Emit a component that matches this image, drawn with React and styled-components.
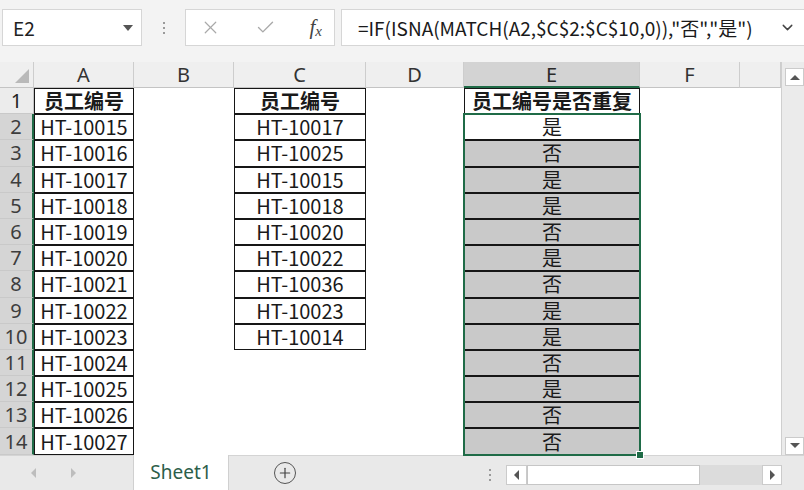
import React from "react";
import styled, { createGlobalStyle } from "styled-components";
import { X, Check, ChevronDown, Plus } from "lucide-react";

const ROW_H = 26.2;
const GREEN = "#1f6b47";

const GlobalStyle = createGlobalStyle`
  html, body {
    margin: 0;
    padding: 0;
    background: #f3f3f3;
    overflow: hidden;
  }
  body {
    font-family: "Noto Sans CJK SC", "Noto Sans", sans-serif;
    color: #1a1a1a;
  }
`;

const Page = styled.div`
  width: 804px;
  height: 490px;
  display: flex;
  flex-direction: column;
  overflow: hidden;
`;

/* ---------- formula bar ---------- */

const Toolbar = styled.div`
  height: 62px;
  flex: none;
  display: flex;
  align-items: flex-start;
  padding: 9px 0 0 2px;
  box-sizing: border-box;
  background: #f3f3f3;
`;

const Box = styled.div`
  height: 37px;
  box-sizing: border-box;
  background: #fff;
  border: 1px solid #d6d6d6;
  display: flex;
  align-items: center;
`;

const NameBox = styled(Box)`
  width: 140px;
  padding: 0 8px 0 10px;
  justify-content: space-between;
  font-size: 19px;
  color: #222;
`;

const Caret = styled.span`
  width: 0;
  height: 0;
  border-left: 5px solid transparent;
  border-right: 5px solid transparent;
  border-top: 6px solid #555;
`;

const Grip = styled.div`
  width: 43px;
  height: 37px;
  display: flex;
  flex-direction: column;
  align-items: center;
  justify-content: center;
  gap: 3px;
  span {
    width: 2px;
    height: 2px;
    background: #9a9a9a;
  }
`;

const FxButtons = styled(Box)`
  width: 150px;
  padding: 0 12px 0 14px;
  justify-content: space-between;
  color: #a9a9a9;
`;

const Fx = styled.span`
  font-family: "Liberation Serif", "DejaVu Serif", serif;
  font-style: italic;
  font-size: 21px;
  color: #444;
  sub {
    font-size: 15px;
    vertical-align: baseline;
    position: relative;
    top: 2px;
  }
`;

const FormulaBox = styled(Box)`
  flex: 1;
  margin-left: 6px;
  border-right: none;
  padding: 0 8px 0 16px;
  justify-content: space-between;
  font-size: 19px;
  color: #1a1a1a;
  white-space: nowrap;
`;

/* ---------- sheet ---------- */

const SheetArea = styled.div`
  flex: none;
  height: ${26 + ROW_H * 14}px;
  display: flex;
  background: #fff;
`;

const Grid = styled.div`
  display: flex;
  width: 782px;
`;

const Column = styled.div`
  width: ${(p) => p.$w}px;
  flex: none;
  display: flex;
  flex-direction: column;
  background: #fff;
  border-right: ${(p) => (p.$edge ? "1px solid #cfcfcf" : "none")};
  box-sizing: border-box;
`;

const ColHead = styled.div`
  height: 26px;
  flex: none;
  box-sizing: border-box;
  display: flex;
  align-items: center;
  justify-content: center;
  font-size: 20px;
  color: ${(p) => (p.$active ? "#2a2a2a" : "#333")};
  background: ${(p) => (p.$active ? "#d3d3d3" : "#efefef")};
  border-bottom: ${(p) => (p.$active ? `2px solid ${GREEN}` : "1px solid #c4c4c4")};
  border-right: 1px solid #cdcdcd;
  font-family: "Noto Sans", sans-serif;
`;

const Corner = styled(ColHead)`
  position: relative;
  &::after {
    content: "";
    position: absolute;
    right: 4px;
    bottom: 4px;
    border-left: 14px solid transparent;
    border-bottom: 14px solid #b9b9b9;
  }
`;

const RowNum = styled.div`
  height: ${ROW_H}px;
  flex: none;
  box-sizing: border-box;
  display: flex;
  align-items: center;
  justify-content: center;
  font-family: "Noto Sans", sans-serif;
  font-size: 20px;
  color: ${(p) => (p.$active ? "#3d3d3d" : "#222")};
  background: ${(p) => (p.$active ? "#d5d5d5" : "#ececec")};
  border-bottom: 1px solid #c9c9c9;
  border-right: ${(p) => (p.$active ? `2px solid ${GREEN}` : "1px solid #c4c4c4")};
`;

const Cell = styled.div`
  height: ${ROW_H}px;
  flex: none;
  box-sizing: border-box;
  display: flex;
  align-items: center;
  justify-content: center;
  font-size: 20px;
  line-height: 1;
  white-space: nowrap;
  font-weight: ${(p) => (p.$bold ? 700 : 400)};
  background: ${(p) => (p.$shaded ? "#c9c9c9" : "#fff")};
  border: ${(p) => (p.$bordered ? "1px solid #161616" : "none")};
`;

const Selection = styled.div`
  position: relative;
  display: flex;
  flex-direction: column;
  outline: 2px solid ${GREEN};
  outline-offset: -1px;
  &::after {
    content: "";
    position: absolute;
    right: -4px;
    bottom: -4px;
    width: 6px;
    height: 6px;
    background: ${GREEN};
    border: 1px solid #fff;
  }
`;

const VScroll = styled.div`
  flex: 1;
  display: flex;
  flex-direction: column;
  justify-content: space-between;
  align-items: flex-end;
  padding: 6px 0 0;
  background: #ebebeb;
`;

const ArrowBtn = styled.div`
  width: ${(p) => p.$w || 19}px;
  height: ${(p) => p.$h || 18}px;
  flex: none;
  box-sizing: border-box;
  background: #fff;
  border: 1px solid #cbcbcb;
  display: flex;
  align-items: center;
  justify-content: center;
`;

const Tri = styled.span`
  width: 0;
  height: 0;
  ${(p) =>
    p.$dir === "up"
      ? `border-left:5px solid transparent;border-right:5px solid transparent;border-bottom:5px solid #555;`
      : p.$dir === "down"
      ? `border-left:5px solid transparent;border-right:5px solid transparent;border-top:5px solid #555;`
      : p.$dir === "left"
      ? `border-top:5px solid transparent;border-bottom:5px solid transparent;border-right:5px solid ${p.$c || "#555"};`
      : `border-top:5px solid transparent;border-bottom:5px solid transparent;border-left:5px solid ${p.$c || "#555"};`}
`;

/* ---------- sheet tabs ---------- */

const TabBar = styled.div`
  flex: 1;
  display: flex;
  align-items: stretch;
  background: #e9e9e9;
  border-top: 1px solid #d4d4d4;
`;

const TabNav = styled.div`
  width: 133px;
  display: flex;
  align-items: center;
  padding-left: 31px;
  gap: 35px;
  box-sizing: border-box;
`;

const SheetTab = styled.div`
  width: 94px;
  background: #fff;
  display: flex;
  align-items: center;
  justify-content: center;
  font-family: "Noto Sans", sans-serif;
  font-size: 19px;
  color: #2c5e4a;
  border-left: 1px solid #d0d0d0;
  border-right: 1px solid #d0d0d0;
  margin-top: -1px;
`;

const AddSheet = styled.div`
  margin-left: 45px;
  align-self: center;
  width: 22px;
  height: 22px;
  box-sizing: border-box;
  border: 1.5px solid #555;
  border-radius: 50%;
  display: flex;
  align-items: center;
  justify-content: center;
  color: #444;
`;

const Spacer = styled.div`
  flex: 1;
`;

const HScrollWrap = styled.div`
  width: 331px;
  display: flex;
  align-items: center;
  padding-top: 4px;
`;

const HGrip = styled(Grip)`
  width: 33px;
  height: 20px;
`;

const Thumb = styled.div`
  width: 173px;
  height: 20px;
  box-sizing: border-box;
  background: #fff;
  border: 1px solid #c6c6c6;
`;

const Track = styled.div`
  width: 62px;
  height: 20px;
  background: #dcdcdc;
`;

const colA = ["HT-10015", "HT-10016", "HT-10017", "HT-10018", "HT-10019", "HT-10020", "HT-10021", "HT-10022", "HT-10023", "HT-10024", "HT-10025", "HT-10026", "HT-10027"];
const colC = ["HT-10017", "HT-10025", "HT-10015", "HT-10018", "HT-10020", "HT-10022", "HT-10036", "HT-10023", "HT-10014"];
const colE = ["是", "否", "是", "是", "否", "是", "否", "是", "是", "否", "是", "否", "否"];

const BlankColumn = ({ w, label, edge }) => (
  <Column $w={w} $edge={edge}>
    <ColHead>{label}</ColHead>
  </Column>
);

export default function App() {
  return (
    <Page>
      <GlobalStyle />
      <Toolbar>
        <NameBox>
          E2
          <Caret />
        </NameBox>
        <Grip>
          <span />
          <span />
          <span />
        </Grip>
        <FxButtons>
          <X size={21} strokeWidth={1.4} />
          <Check size={21} strokeWidth={1.6} />
          <Fx>
            f<sub>x</sub>
          </Fx>
        </FxButtons>
        <FormulaBox>
          =IF(ISNA(MATCH(A2,$C$2:$C$10,0)),"否","是")
          <ChevronDown size={17} strokeWidth={2} color="#444" />
        </FormulaBox>
      </Toolbar>

      <SheetArea>
        <Grid>
          <Column $w={34}>
            <Corner />
            {Array.from({ length: 14 }, (_, i) => (
              <RowNum key={i} $active={i > 0}>
                {i + 1}
              </RowNum>
            ))}
          </Column>

          <Column $w={100}>
            <ColHead>A</ColHead>
            <Cell $bordered $bold>员工编号</Cell>
            {colA.map((v) => (
              <Cell key={v} $bordered>
                {v}
              </Cell>
            ))}
          </Column>

          <BlankColumn w={100} label="B" />

          <Column $w={132}>
            <ColHead>C</ColHead>
            <Cell $bordered $bold>员工编号</Cell>
            {colC.map((v) => (
              <Cell key={v} $bordered>
                {v}
              </Cell>
            ))}
          </Column>

          <BlankColumn w={98} label="D" />

          <Column $w={176}>
            <ColHead $active>E</ColHead>
            <Cell $bordered $bold>员工编号是否重复</Cell>
            <Selection>
              {colE.map((v, i) => (
                <Cell key={i} $bordered $shaded={i > 0}>
                  {v}
                </Cell>
              ))}
            </Selection>
          </Column>

          <BlankColumn w={100} label="F" />
          <BlankColumn w={42} label="" edge />
        </Grid>
        <VScroll>
          <ArrowBtn>
            <Tri $dir="up" />
          </ArrowBtn>
          <ArrowBtn>
            <Tri $dir="down" />
          </ArrowBtn>
        </VScroll>
      </SheetArea>

      <TabBar>
        <TabNav>
          <Tri $dir="left" $c="#bdbdbd" />
          <Tri $dir="right" $c="#bdbdbd" />
        </TabNav>
        <SheetTab>Sheet1</SheetTab>
        <AddSheet>
          <Plus size={16} strokeWidth={1.8} />
        </AddSheet>
        <Spacer />
        <HScrollWrap>
          <HGrip>
            <span />
            <span />
            <span />
          </HGrip>
          <ArrowBtn $w={21} $h={20}>
            <Tri $dir="left" />
          </ArrowBtn>
          <Thumb />
          <Track />
          <ArrowBtn $w={20} $h={20}>
            <Tri $dir="right" />
          </ArrowBtn>
        </HScrollWrap>
      </TabBar>
    </Page>
  );
}
